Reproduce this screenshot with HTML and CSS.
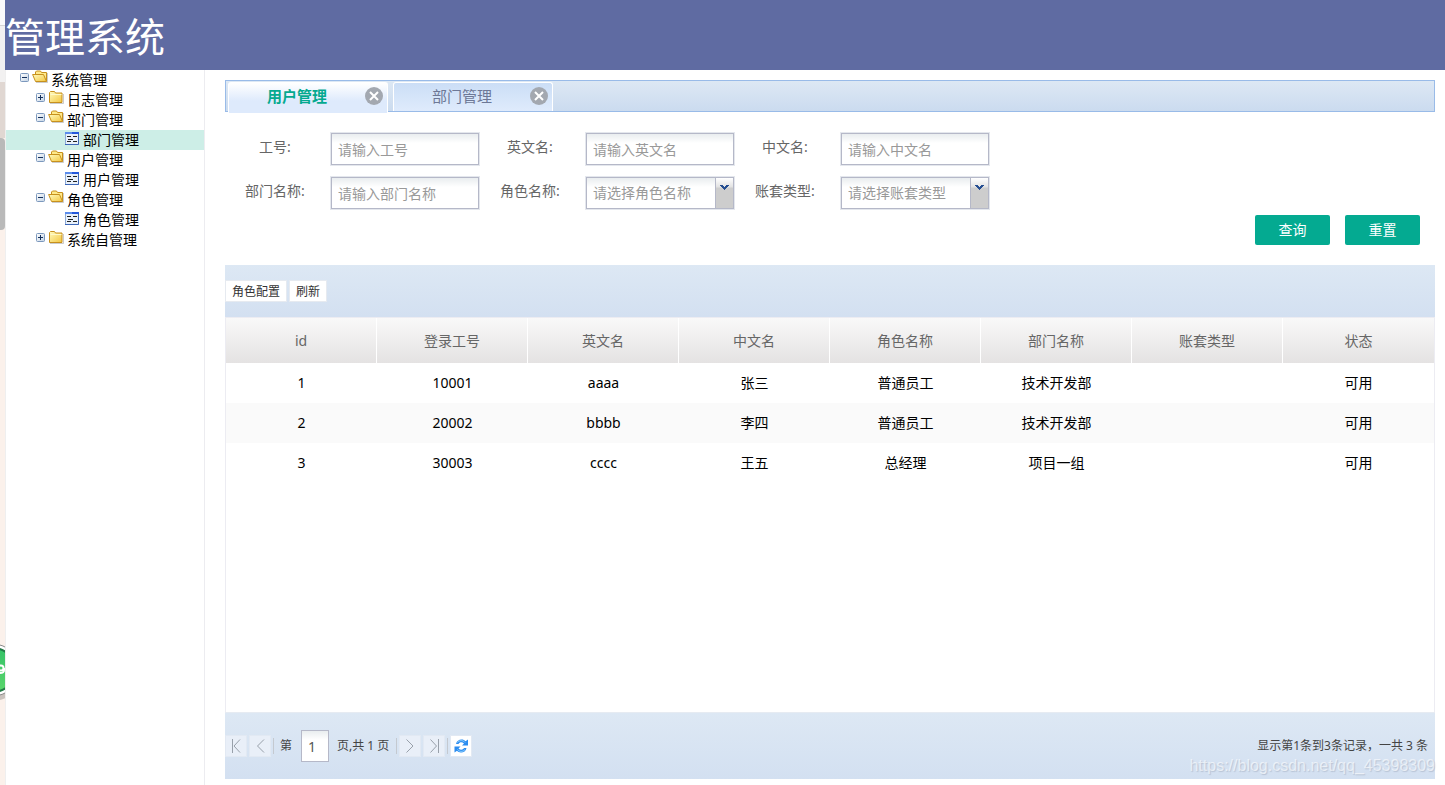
FILE: index.html
```html
<!DOCTYPE html>
<html lang="zh-CN">
<head>
<meta charset="utf-8">
<title>管理系统</title>
<link rel="stylesheet" href="styles.css">
</head>
<body>
<svg class="defs" aria-hidden="true">
  <defs>
    <linearGradient id="gold" x1="0" y1="0" x2="1" y2="1"><stop offset="0" stop-color="#fffbc0"/><stop offset="1" stop-color="#f3c63f"/></linearGradient>
    <linearGradient id="steel" x1="0" y1="0" x2="1" y2="1"><stop offset="0" stop-color="#fff"/><stop offset="1" stop-color="#c3d3e4"/></linearGradient>
    <linearGradient id="orb" x1="0" y1="0" x2="0" y2="1"><stop offset="0" stop-color="#35c268"/><stop offset="1" stop-color="#5bd66c"/></linearGradient>
    <symbol id="minus" viewBox="0 0 9 9"><rect x=".5" y=".5" width="8" height="8" rx="1" fill="url(#steel)" stroke="#7c98bd"/><path d="M2 4.5h5" stroke="#14305c"/></symbol>
    <symbol id="plus" viewBox="0 0 9 9"><rect x=".5" y=".5" width="8" height="8" rx="1" fill="url(#steel)" stroke="#7c98bd"/><path d="M2 4.5h5M4.5 2v5" stroke="#14305c"/></symbol>
    <symbol id="closed" viewBox="0 0 16 14"><path d="M2 13.500h13.500V4" fill="none" stroke="#aaa" opacity=".6"/><path d="M1.500 2.500l1-1h4l1 1.500h6.500v9.500H1.500z" fill="url(#gold)" stroke="#c7901d"/><path d="M2.500 4.500h11" stroke="#fff9c8"/></symbol>
    <symbol id="opened" viewBox="0 0 16 14"><path d="M4 12.500h11.500V3" fill="none" stroke="#aaa" opacity=".6"/><path d="M3.500 9V2l1-1h4l1 1.500h5v9" fill="#ffe98a" stroke="#c7901d"/><path d="M.6 4.500h10.900l3 7H3.500z" fill="url(#gold)" stroke="#c7901d"/></symbol>
    <symbol id="leaf" viewBox="0 0 14 13"><path d="M.5 .5h13v12H.5z" fill="#e9f1fb" stroke="#8caad8"/><path d="M0 1h14" stroke="#5b8cec" stroke-width="2"/><path d="M7 1h7" stroke="#2458dc" stroke-width="2"/><path d="M13.500 2v10.500H0" fill="none" stroke="#3e68b8"/><path d="M2 4.500h4M8 4.500h4M3 7.500h3M2 9.500h4M8 9.500h4" stroke="#222"/><path d="M6 7.500h2" stroke="#222"/></symbol>
    <symbol id="close" viewBox="0 0 18 18"><circle cx="9" cy="9" r="9" fill="#a3a8b0"/><path d="M5 5l8 8M13 5l-8 8" stroke="#fff" stroke-width="2"/></symbol>
    <symbol id="arrow" viewBox="0 0 9 6"><path d="M0 0h3v1h1v1h1v-1h1v-1h3v1h-1v1h-1v1h-1v1h-1v1h-1v-1h-1v-1h-1v-1h-1v-1h-1z" fill="#254e91"/></symbol>
  </defs>
</svg>

<div class="page">
  <aside class="edge" aria-hidden="true">
    <span class="edge-top"></span><span class="edge-light"></span><span class="edge-brown"></span><span class="edge-thumb"></span>
    <svg class="orb" width="5" height="60" viewBox="0 0 5 60"><circle cx="-7" cy="31" r="28" fill="#c9c2bd"/><circle cx="-7" cy="28" r="26" fill="#fff" stroke="#888"/><circle cx="-7" cy="28" r="22" fill="url(#orb)" stroke="#237a47" stroke-width="2"/><circle cx="1" cy="26" r="2.500" fill="none" stroke="#fff" stroke-width="2"/><path d="M4 26v2q0 3-4 3" fill="none" stroke="#fff" stroke-width="2"/></svg>
  </aside>
  <div class="app">
    <header class="banner"><h1 class="title">管理系统</h1></header>
    <div class="body">
      <nav class="side">
        <ul class="tree">
          <li class="node"><svg class="toggle"><use href="#minus"/></svg><svg class="folder"><use href="#opened"/></svg>系统管理</li>
          <li class="node child"><svg class="toggle"><use href="#plus"/></svg><svg class="folder"><use href="#closed"/></svg>日志管理</li>
          <li class="node child"><svg class="toggle"><use href="#minus"/></svg><svg class="folder"><use href="#opened"/></svg>部门管理</li>
          <li class="node item selected"><svg class="leaf"><use href="#leaf"/></svg>部门管理</li>
          <li class="node child"><svg class="toggle"><use href="#minus"/></svg><svg class="folder"><use href="#opened"/></svg>用户管理</li>
          <li class="node item"><svg class="leaf"><use href="#leaf"/></svg>用户管理</li>
          <li class="node child"><svg class="toggle"><use href="#minus"/></svg><svg class="folder"><use href="#opened"/></svg>角色管理</li>
          <li class="node item"><svg class="leaf"><use href="#leaf"/></svg>角色管理</li>
          <li class="node child"><svg class="toggle"><use href="#plus"/></svg><svg class="folder"><use href="#closed"/></svg>系统自管理</li>
        </ul>
      </nav>
      <main class="main">
        <div class="tabs">
          <div class="tab active"><button class="tab-name">用户管理</button><button class="tab-close" aria-label="关闭"><svg width="18" height="18"><use href="#close"/></svg></button></div>
          <div class="tab"><button class="tab-name">部门管理</button><button class="tab-close" aria-label="关闭"><svg width="18" height="18"><use href="#close"/></svg></button></div>
        </div>
        <form class="search">
          <div class="fields">
            <label class="label" for="no">工号:</label><input class="field" id="no" placeholder="请输入工号">
            <label class="label" for="en">英文名:</label><input class="field" id="en" placeholder="请输入英文名">
            <label class="label" for="cn">中文名:</label><input class="field" id="cn" placeholder="请输入中文名">
            <label class="label" for="dept">部门名称:</label><input class="field" id="dept" placeholder="请输入部门名称">
            <label class="label" for="role">角色名称:</label><div class="combo"><select class="field pick" id="role"><option>请选择角色名称</option></select><span class="trigger"><svg width="9" height="6"><use href="#arrow"/></svg></span></div>
            <label class="label" for="acct">账套类型:</label><div class="combo"><select class="field pick" id="acct"><option>请选择账套类型</option></select><span class="trigger"><svg width="9" height="6"><use href="#arrow"/></svg></span></div>
          </div>
          <div class="actions"><button class="primary" type="button">查询</button><button class="primary" type="reset">重置</button></div>
        </form>
        <section class="panel">
          <div class="toolbar"><button class="tool">角色配置</button><button class="tool">刷新</button></div>
          <div class="grid">
            <table class="table">
              <thead><tr><th>id</th><th>登录工号</th><th>英文名</th><th>中文名</th><th>角色名称</th><th>部门名称</th><th>账套类型</th><th>状态</th></tr></thead>
              <tbody>
                <tr><td>1</td><td>10001</td><td>aaaa</td><td>张三</td><td>普通员工</td><td>技术开发部</td><td></td><td>可用</td></tr>
                <tr><td>2</td><td>20002</td><td>bbbb</td><td>李四</td><td>普通员工</td><td>技术开发部</td><td></td><td>可用</td></tr>
                <tr><td>3</td><td>30003</td><td>cccc</td><td>王五</td><td>总经理</td><td>项目一组</td><td></td><td>可用</td></tr>
              </tbody>
            </table>
          </div>
          <footer class="pager">
            <div class="pages">
              <button class="nav" aria-label="首页"><svg width="20" height="20"><path d="M6.500 3v14M14 3.500L8 10l6 6.500"/></svg></button>
              <button class="nav" aria-label="上一页"><svg width="20" height="20"><path d="M14 3.500L7.500 10l6.500 6.500"/></svg></button>
              <span class="sep"></span>
              <label class="first" for="page">第</label>
              <input class="page-no" id="page" value="1">
              <span class="total">页,共 1 页</span>
              <span class="sep"></span>
              <button class="nav" aria-label="下一页"><svg width="20" height="20"><path d="M6.500 3.500L13 10l-6.500 6.500"/></svg></button>
              <button class="nav" aria-label="末页"><svg width="20" height="20"><path d="M6.500 3.500L12.500 10l-6 6.500M14.500 3v14"/></svg></button>
              <span class="sep"></span>
              <button class="nav refresh" aria-label="刷新"><svg width="20" height="20" viewBox="0 0 20 20"><path class="swirl" d="M5 8c.5-3 3-4.500 5.500-4.500 1.700 0 3 .6 4 1.700L17 3.500v6h-6l2-2C11 5.700 8.500 6 7.500 8z"/><path class="swirl" d="M15.500 12c-.5 3-3 4.500-5.500 4.500-1.700 0-3-.6-4-1.700l-2.500 1.700v-6h6l-2 2c2 1.800 4.500 1.500 5.500-.5z"/><path class="shine" d="M6.500 6.500c2-2.500 5.500-2.500 7.500 0M6.500 13.500c2 2.500 5.500 2.500 7.500 0"/></svg></button>
            </div>
            <span class="summary">显示第1条到3条记录，一共 3 条</span>
          </footer>
          <span class="watermark">https://blog.csdn.net/qq_45398309</span>
        </section>
      </main>
    </div>
  </div>
</div>
</body>
</html>
```
FILE: styles.css
```css
* { box-sizing: border-box; }
body { margin: 0; color: #000; background: #fff; font: 14px/20px "Noto Sans", "Noto Sans CJK SC", sans-serif; }
button, input, select { font: inherit; margin: 0; padding: 0; border: 0; border-radius: 0; }
svg { display: block; flex: none; }
.defs { position: absolute; width: 0; height: 0; }

.page { display: flex; min-height: 100vh; }
.app { flex: 1; min-width: 0; display: flex; flex-direction: column; }

.edge { position: relative; width: 5px; background: #fbf1eb; display: flex; flex-direction: column; }
.edge-top { height: 26px; background: #fafafb; border-bottom: 1px solid #d5d5d5; }
.edge-light { height: 56px; background: #f2f1f1; }
.edge-brown { height: 56px; background: #e0d7d2; }
.edge-thumb { height: 92px; background: #b9b9b9; border-radius: 0 4px 4px 0; }
.orb { position: absolute; left: 0; top: 642px; }

.banner { height: 70px; padding-top: 7px; background: #5f6ba2; }
.title { margin: 0; color: #fff; font-size: 40px; line-height: 60px; font-weight: 400; }

.body { flex: 1; display: flex; }
.side { width: 200px; border-left: 1px solid #efefef; border-right: 1px solid #ececf0; }
.tree { list-style: none; margin: 0; padding: 0; }
.node { display: flex; gap: 3px; height: 20px; padding-left: 14px; }
.child { padding-left: 30px; }
.item { gap: 4px; padding-left: 59px; }
.selected { background: #cdeee7; }
.toggle { width: 9px; height: 9px; margin-top: 3px; }
.folder { width: 16px; height: 14px; }
.leaf { width: 14px; height: 13px; margin-top: 2px; }

.main { flex: 1; min-width: 0; display: flex; flex-direction: column; padding: 10px 10px 6px 20px; }

.tabs { display: flex; gap: 5px; height: 32px; padding: 1px 2px 0; border: 1px solid #99bbe8; background: linear-gradient(#dde8f4, #cbdbef); }
.tab { display: flex; align-items: center; width: 160px; height: 29px; padding: 0 4px 2px 0; border: 1px solid #fff; border-bottom: 0; border-radius: 3px 3px 0 0; background: linear-gradient(#cbdef6, #dfebfc); }
.active { height: 31px; padding-bottom: 4px; background: linear-gradient(#fff, #deeafc 60%); }
.tab-name { flex: 1; background: none; color: #6d7896; font-size: 15px; }
.active .tab-name { color: #04a98f; font-weight: 700; }
.tab-close { background: none; }

.search { padding-top: 20px; }
.fields { display: grid; grid-template-columns: repeat(3, 105px 150px); row-gap: 10px; }
.label { padding-right: 5px; color: #666; text-align: center; line-height: 30px; }
.field { width: 148px; height: 32px; margin: 1px; padding: 0 6px; border: 1px solid #b5b8c8; background: linear-gradient(#e9edef, #fff 9px); box-shadow: 0 0 0 1px #e4e7ed; color: #999; }
.field::placeholder { color: #999; opacity: 1; }
.combo { position: relative; }
.pick { display: block; appearance: none; padding-right: 22px; }
.trigger { position: absolute; top: 2px; right: 2px; width: 18px; height: 30px; padding: 7px 0 0 4px; border-left: 1px solid #b5b8c8; background: linear-gradient(#fff, #e2e2e2 9px, #cdcdcd 10px); pointer-events: none; }
.actions { display: flex; justify-content: flex-end; gap: 15px; padding: 5px 15px 20px 0; }
.primary { width: 75px; height: 30px; border-radius: 2px; background: #04aa91; color: #fff; }

.panel { position: relative; flex: 1; display: flex; flex-direction: column; }
.toolbar { display: flex; gap: 4px; height: 52px; padding: 16px 1px; background: linear-gradient(#dde8f4, #d3e0f1); }
.tool { padding: 1px 6px 0; background: #fff; color: #333; font-size: 12px; line-height: 19px; box-shadow: 0 0 0 1px #e6eaf0; }
.grid { flex: 1; border: 1px solid #ececf2; border-bottom: 0; }
.table { width: 100%; table-layout: fixed; border-collapse: separate; border-spacing: 0; text-align: center; }
.table th { height: 45px; padding: 0; border-right: 1px solid #fff; font-weight: 400; color: #666; background: linear-gradient(#f9f9f9, #e4e2e2); }
.table th:last-child { border-right: 0; }
.table td { height: 40px; padding: 0; }
.table tbody tr:nth-child(even) { background: #fafafa; }

.pager { display: flex; align-items: center; justify-content: space-between; height: 67px; padding: 0 7px 0 1px; border-top: 1px solid #e6ebf2; background: linear-gradient(#dde8f4, #d3e0f1); color: #444; font-size: 12px; line-height: 22px; }
.pages { display: flex; align-items: center; gap: 4px; }
.nav { width: 20px; height: 20px; background: #e9eff8; box-shadow: 0 0 0 1px #e2e9f3; }
.nav path { fill: none; stroke: #98a0aa; stroke-width: 1; }
.refresh { background: #fff; }
.nav .swirl { fill: #2b8cf0; stroke: none; }
.nav .shine { stroke: #8fd3ff; }
.sep { width: 1px; height: 16px; margin: 0 -1px; background: #c4c9d0; }
.first { margin-left: 3px; }
.page-no { width: 28px; height: 32px; margin: 0 4px 0 5px; padding: 0 6px; border: 1px solid #b5b8c8; background: linear-gradient(#e9edef, #fff 9px); color: #555; font-size: 14px; }
.total { margin-right: 4px; }
.watermark { position: absolute; right: 0; bottom: 4px; color: rgba(255, 255, 255, .6); font: 16px/18px "Liberation Sans", sans-serif; text-shadow: 1px 1px 1px rgba(120, 130, 150, .3); pointer-events: none; }
```
